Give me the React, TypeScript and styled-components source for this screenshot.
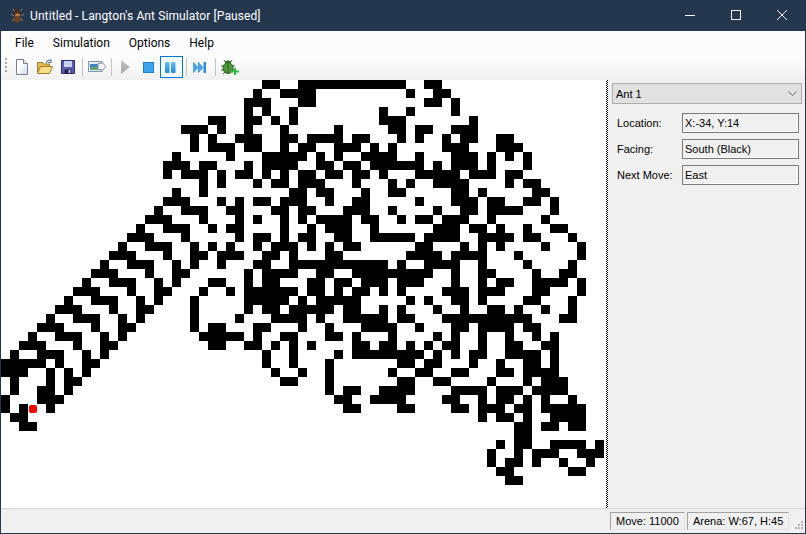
import React, { useMemo } from "react";
import styled, { createGlobalStyle } from "styled-components";

const GlobalStyle = createGlobalStyle`
  html, body { margin: 0; padding: 0; background: #24374f; overflow: hidden; }
  * { box-sizing: border-box; }
`;

const COLS = 67;
const CELL = 9;
const ORIGIN_COL = 37;
const ORIGIN_ROW = 22;
const MOVES = 11000;

// plain Langton's ant: right on white, left on black
const runAnt = () => {
  const black = new Set<string>();
  let x = 0;
  let y = 0;
  let dir = 0;
  const dx = [0, 1, 0, -1];
  const dy = [-1, 0, 1, 0];
  for (let i = 0; i < MOVES; i++) {
    const key = x + "," + y;
    if (black.has(key)) {
      black.delete(key);
      dir = (dir + 3) % 4;
    } else {
      black.add(key);
      dir = (dir + 1) % 4;
    }
    x += dx[dir];
    y += dy[dir];
  }
  return { black, x, y };
};

const Window = styled.div`
  width: 806px;
  height: 534px;
  display: flex;
  flex-direction: column;
  background: #f0f0f0;
  border: 1px solid #24374f;
  border-top: 0;
  font-family: "Roboto", sans-serif;
  font-size: 12px;
  color: #000;
`;

const TitleBar = styled.div`
  height: 31px;
  flex: none;
  margin: 0 -1px;
  display: flex;
  align-items: center;
  background: #24374f;
  color: #fff;
  padding: 0 1px 0 10px;
`;

const TitleText = styled.span`
  margin-left: 5px;
  padding-top: 1px;
  letter-spacing: 0.1px;
  white-space: nowrap;
`;

const WinButtons = styled.div`
  margin-left: auto;
  display: flex;
`;

const WinButton = styled.div`
  width: 46px;
  height: 31px;
  padding-bottom: 1px;
  display: flex;
  align-items: center;
  justify-content: center;
`;

const MenuBar = styled.div`
  height: 24px;
  flex: none;
  display: flex;
  align-items: center;
  padding-left: 4.5px;
  background: #fcfcfc;
`;

const MenuItem = styled.span`
  padding: 0 9.5px;
  white-space: nowrap;
`;

const ToolBar = styled.div`
  height: 25px;
  flex: none;
  display: flex;
  align-items: flex-start;
  padding: 1px 0 0 4px;
  background: linear-gradient(#fdfdfd 0%, #fbfbfb 30%, #f0f0f0 100%);
`;

const Grip = styled.div`
  width: 2px;
  height: 16px;
  margin: 2px 3px 0 0;
  background: repeating-linear-gradient(#a8a8a8 0 2px, transparent 2px 4px);
`;

const ToolButton = styled.div<{ $active?: boolean }>`
  width: 23px;
  height: 22px;
  display: flex;
  align-items: center;
  justify-content: center;
  border: 1px solid ${(p) => (p.$active ? "#0078d7" : "transparent")};
  background: ${(p) => (p.$active ? "#f4f9fd" : "transparent")};
`;

const ToolSep = styled.div`
  width: 1px;
  height: 18px;
  margin: 2px 2px 0 3px;
  background: #c4c4c4;
`;

const Body = styled.div`
  flex: 1;
  display: flex;
  min-height: 0;
`;

const Arena = styled.div`
  width: 605px;
  flex: none;
  background: #fff;
  overflow: hidden;
`;

const Splitter = styled.div`
  width: 2px;
  flex: none;
  background: repeating-conic-gradient(#000 0 25%, #fff 0 50%) 0 0 / 2px 2px;
`;

const Side = styled.div`
  flex: 1;
  padding: 3px 3px 0 4px;
  font-family: "Liberation Sans", sans-serif;
  font-size: 11px;
`;

const Combo = styled.div`
  height: 21px;
  display: flex;
  align-items: center;
  justify-content: space-between;
  padding: 0 4px 0 3px;
  background: #e1e1e1;
  border: 1px solid #adadad;
  margin-bottom: 9px;
`;

const Field = styled.div`
  height: 20px;
  display: flex;
  align-items: center;
  margin: 0 3px 6px 0;
`;

const FieldLabel = styled.span`
  width: 70px;
  padding-left: 5px;
  white-space: nowrap;
`;

const FieldValue = styled.div`
  flex: 1;
  height: 20px;
  display: flex;
  align-items: center;
  padding-left: 2px;
  border: 1px solid #7a7a7a;
  background: #f0f0f0;
  box-shadow: inset -1px -1px 0 #fbfbfb;
`;

const StatusBar = styled.div`
  height: 25px;
  flex: none;
  display: flex;
  align-items: center;
  justify-content: flex-end;
  padding-right: 16px;
  gap: 2px;
  border-top: 1px solid #d7d7d7;
  font-family: "Liberation Sans", sans-serif;
  font-size: 11px;
  position: relative;
`;

const StatusCell = styled.div<{ $w: number }>`
  width: ${(p) => p.$w}px;
  height: 18px;
  display: flex;
  align-items: center;
  padding-left: 5px;
  border: 1px solid #a0a0a0;
  border-right-color: #e3e3e3;
  border-bottom-color: #e3e3e3;
  white-space: nowrap;
`;

const ResizeGrip = styled.svg`
  position: absolute;
  right: 2px;
  bottom: 4px;
`;

const NewIcon = () => (
  <svg width="16" height="16" viewBox="0 0 16 16">
    <defs>
      <linearGradient id="page" x1="0" y1="0" x2="1" y2="1">
        <stop offset="0.4" stopColor="#fff" />
        <stop offset="1" stopColor="#c8d6e6" />
      </linearGradient>
    </defs>
    <path d="M2.5 .5h7l4 4v11h-11z" fill="url(#page)" stroke="#76808c" />
    <path d="M9.5 .5v4h4" fill="#e6ecf3" stroke="#76808c" />
  </svg>
);

const OpenIcon = () => (
  <svg width="18" height="16" viewBox="0 0 18 16">
    <path d="M1.5 3.5h5l1 1.5h6v8h-12z" fill="#e8b94e" stroke="#a07a2a" />
    <path d="M1.5 14.5l3-7h12l-3 7z" fill="#fbdf86" stroke="#a07a2a" />
    <path d="M10 4c1-2.5 3-3.5 5-2.5M15 .5v3h-3" fill="none" stroke="#5a7ba6" strokeWidth="1.2" />
  </svg>
);

const SaveIcon = () => (
  <svg width="16" height="16" viewBox="0 0 16 16">
    <path d="M1.5 1.5h13v13h-13z" fill="#5b5bb0" stroke="#2c2c78" />
    <path d="M4 2h8v6h-8z" fill="#c9cff0" />
    <path d="M4.5 10.5h7v4h-7z" fill="#23234a" />
    <path d="M8.5 11h2v3h-2z" fill="#c9c9d8" />
  </svg>
);

const ExportIcon = () => (
  <svg width="18" height="14" viewBox="0 0 18 14">
    <path d="M.5 1.5h13v10h-13z" fill="#e8eef5" stroke="#7b93ad" />
    <path d="M2 4h10v3h-10z" fill="#3f86c2" />
    <path d="M2 7h10v3h-10z" fill="#6aa277" />
    <path d="M10 3.5h3.5v-2.5l4 5.5-4 5.5v-2.5h-3.5z" fill="#f4f6f8" stroke="#8e9aa8" />
  </svg>
);

const PlayIcon = () => (
  <svg width="9" height="14" viewBox="0 0 9 14">
    <defs>
      <linearGradient id="grey" x1="0" y1="0" x2="0" y2="1">
        <stop offset="0" stopColor="#c4c4c4" />
        <stop offset="1" stopColor="#a4a4a4" />
      </linearGradient>
    </defs>
    <path d="M0 0l9 7-9 7z" fill="url(#grey)" />
  </svg>
);

const BlueFill = () => (
  <defs>
    <linearGradient id="blue" x1="0" y1="0" x2="0" y2="1">
      <stop offset="0" stopColor="#6bbcf2" />
      <stop offset="1" stopColor="#1f86d6" />
    </linearGradient>
  </defs>
);

const StopIcon = () => (
  <svg width="11" height="11" viewBox="0 0 11 11">
    <rect width="11" height="11" fill="#1b7fd0" />
    <rect x="1" y="1" width="9" height="9" fill="#3ea4ee" />
  </svg>
);

const PauseIcon = () => (
  <svg width="11" height="11" viewBox="0 0 11 11" style={{ marginRight: 2 }}>
    <BlueFill />
    <rect y="0" width="4.5" height="11" rx="1" fill="url(#blue)" />
    <rect x="6" y="0" width="4.5" height="11" rx="1" fill="url(#blue)" />
  </svg>
);

const NextIcon = () => (
  <svg width="13" height="11" viewBox="0 0 13 11" style={{ marginRight: 2 }}>
    <path d="M.3 .3l4.7 5.2-4.7 5.2zM5.3 .3l4.7 5.2-4.7 5.2z" fill="#49a6ea" stroke="#1c7fc8" strokeWidth=".6" />
    <rect x="10.5" width="2.5" height="11" fill="#2b8fdc" />
  </svg>
);

const BugIcon = () => (
  <svg width="18" height="16" viewBox="0 0 18 16">
    <path d="M3 1l2 3M11 1l-2 3M0 7h3M14 7h-3M0 11h3M14 11h-3M2 15l3-3" stroke="#33601f" fill="none" />
    <ellipse cx="7" cy="3.5" rx="3" ry="2" fill="#2f6a26" />
    <ellipse cx="7" cy="9" rx="5" ry="5.5" fill="#4f9a3e" stroke="#2c6423" />
    <path d="M7 4v10" stroke="#2c6423" />
    <path d="M13 9h2v2.5h3v2h-3v2.5h-2v-2.5h-3v-2h3z" fill="#2fbf3f" />
  </svg>
);

const AntLogo = () => (
  <svg width="15" height="15" viewBox="0 0 15 15">
    <path d="M3 1l2 3M12 1l-2 3M1 6l3 2M14 6l-3 2M2 13l3-3M13 13l-3-3" stroke="#8f8578" fill="none" />
    <ellipse cx="7.5" cy="4" rx="3.5" ry="2.5" fill="#4e3016" />
    <ellipse cx="7.5" cy="7.5" rx="2.5" ry="2" fill="#c98a3c" />
    <ellipse cx="7.5" cy="11" rx="3.5" ry="3.5" fill="#6e4420" />
  </svg>
);

const App = () => {
  const { black, x, y } = useMemo(runAnt, []);
  const d = useMemo(() => {
    let out = "";
    black.forEach((k) => {
      const [cx, cy] = k.split(",").map(Number);
      out += `M${(cx + ORIGIN_COL) * CELL} ${(cy + ORIGIN_ROW) * CELL}h9v9h-9z`;
    });
    return out;
  }, [black]);
  const antX = (x + ORIGIN_COL) * CELL;
  const antY = (y + ORIGIN_ROW) * CELL;

  return (
    <>
      <GlobalStyle />
      <Window>
        <TitleBar>
          <AntLogo />
          <TitleText>Untitled - Langton's Ant Simulator [Paused]</TitleText>
          <WinButtons>
            <WinButton>
              <svg width="10" height="10"><path d="M0 5.5h10" stroke="#fff" /></svg>
            </WinButton>
            <WinButton>
              <svg width="10" height="10"><path d="M.5 .5h9v9h-9z" stroke="#fff" fill="none" /></svg>
            </WinButton>
            <WinButton>
              <svg width="10" height="10"><path d="M0 0l10 10M10 0l-10 10" stroke="#fff" /></svg>
            </WinButton>
          </WinButtons>
        </TitleBar>
        <MenuBar>
          <MenuItem>File</MenuItem>
          <MenuItem>Simulation</MenuItem>
          <MenuItem>Options</MenuItem>
          <MenuItem>Help</MenuItem>
        </MenuBar>
        <ToolBar>
          <Grip />
          <ToolButton><NewIcon /></ToolButton>
          <ToolButton><OpenIcon /></ToolButton>
          <ToolButton><SaveIcon /></ToolButton>
          <ToolSep />
          <ToolButton><ExportIcon /></ToolButton>
          <ToolSep />
          <ToolButton><PlayIcon /></ToolButton>
          <ToolButton><StopIcon /></ToolButton>
          <ToolButton $active><PauseIcon /></ToolButton>
          <ToolSep />
          <ToolButton><NextIcon /></ToolButton>
          <ToolSep />
          <ToolButton><BugIcon /></ToolButton>
        </ToolBar>
        <Body>
          <Arena>
            <svg width={COLS * CELL} height="428" shapeRendering="crispEdges" style={{ display: "block" }}>
              <path d={d} fill="#000" />
              <rect x={antX} y={antY} width="9" height="9" fill="#fff" />
              <rect x={antX + 1} y={antY + 1} width="8" height="8" rx="2" fill="#f00" shapeRendering="auto" />
            </svg>
          </Arena>
          <Splitter />
          <Side>
            <Combo>
              Ant 1
              <svg width="9" height="6"><path d="M.5 .5l4 4 4-4" stroke="#606060" fill="none" /></svg>
            </Combo>
            <Field>
              <FieldLabel>Location:</FieldLabel>
              <FieldValue>X:-34, Y:14</FieldValue>
            </Field>
            <Field>
              <FieldLabel>Facing:</FieldLabel>
              <FieldValue>South (Black)</FieldValue>
            </Field>
            <Field>
              <FieldLabel>Next Move:</FieldLabel>
              <FieldValue>East</FieldValue>
            </Field>
          </Side>
        </Body>
        <StatusBar>
          <StatusCell $w={75}>Move: 11000</StatusCell>
          <StatusCell $w={102}>Arena: W:67, H:45</StatusCell>
          <ResizeGrip width="9" height="9">
            <path d="M7 1h2v2h-2zM4 4h2v2h-2zM7 4h2v2h-2zM1 7h2v2h-2zM4 7h2v2h-2zM7 7h2v2h-2z" fill="#b4b4b4" />
          </ResizeGrip>
        </StatusBar>
      </Window>
    </>
  );
};

export default App;
